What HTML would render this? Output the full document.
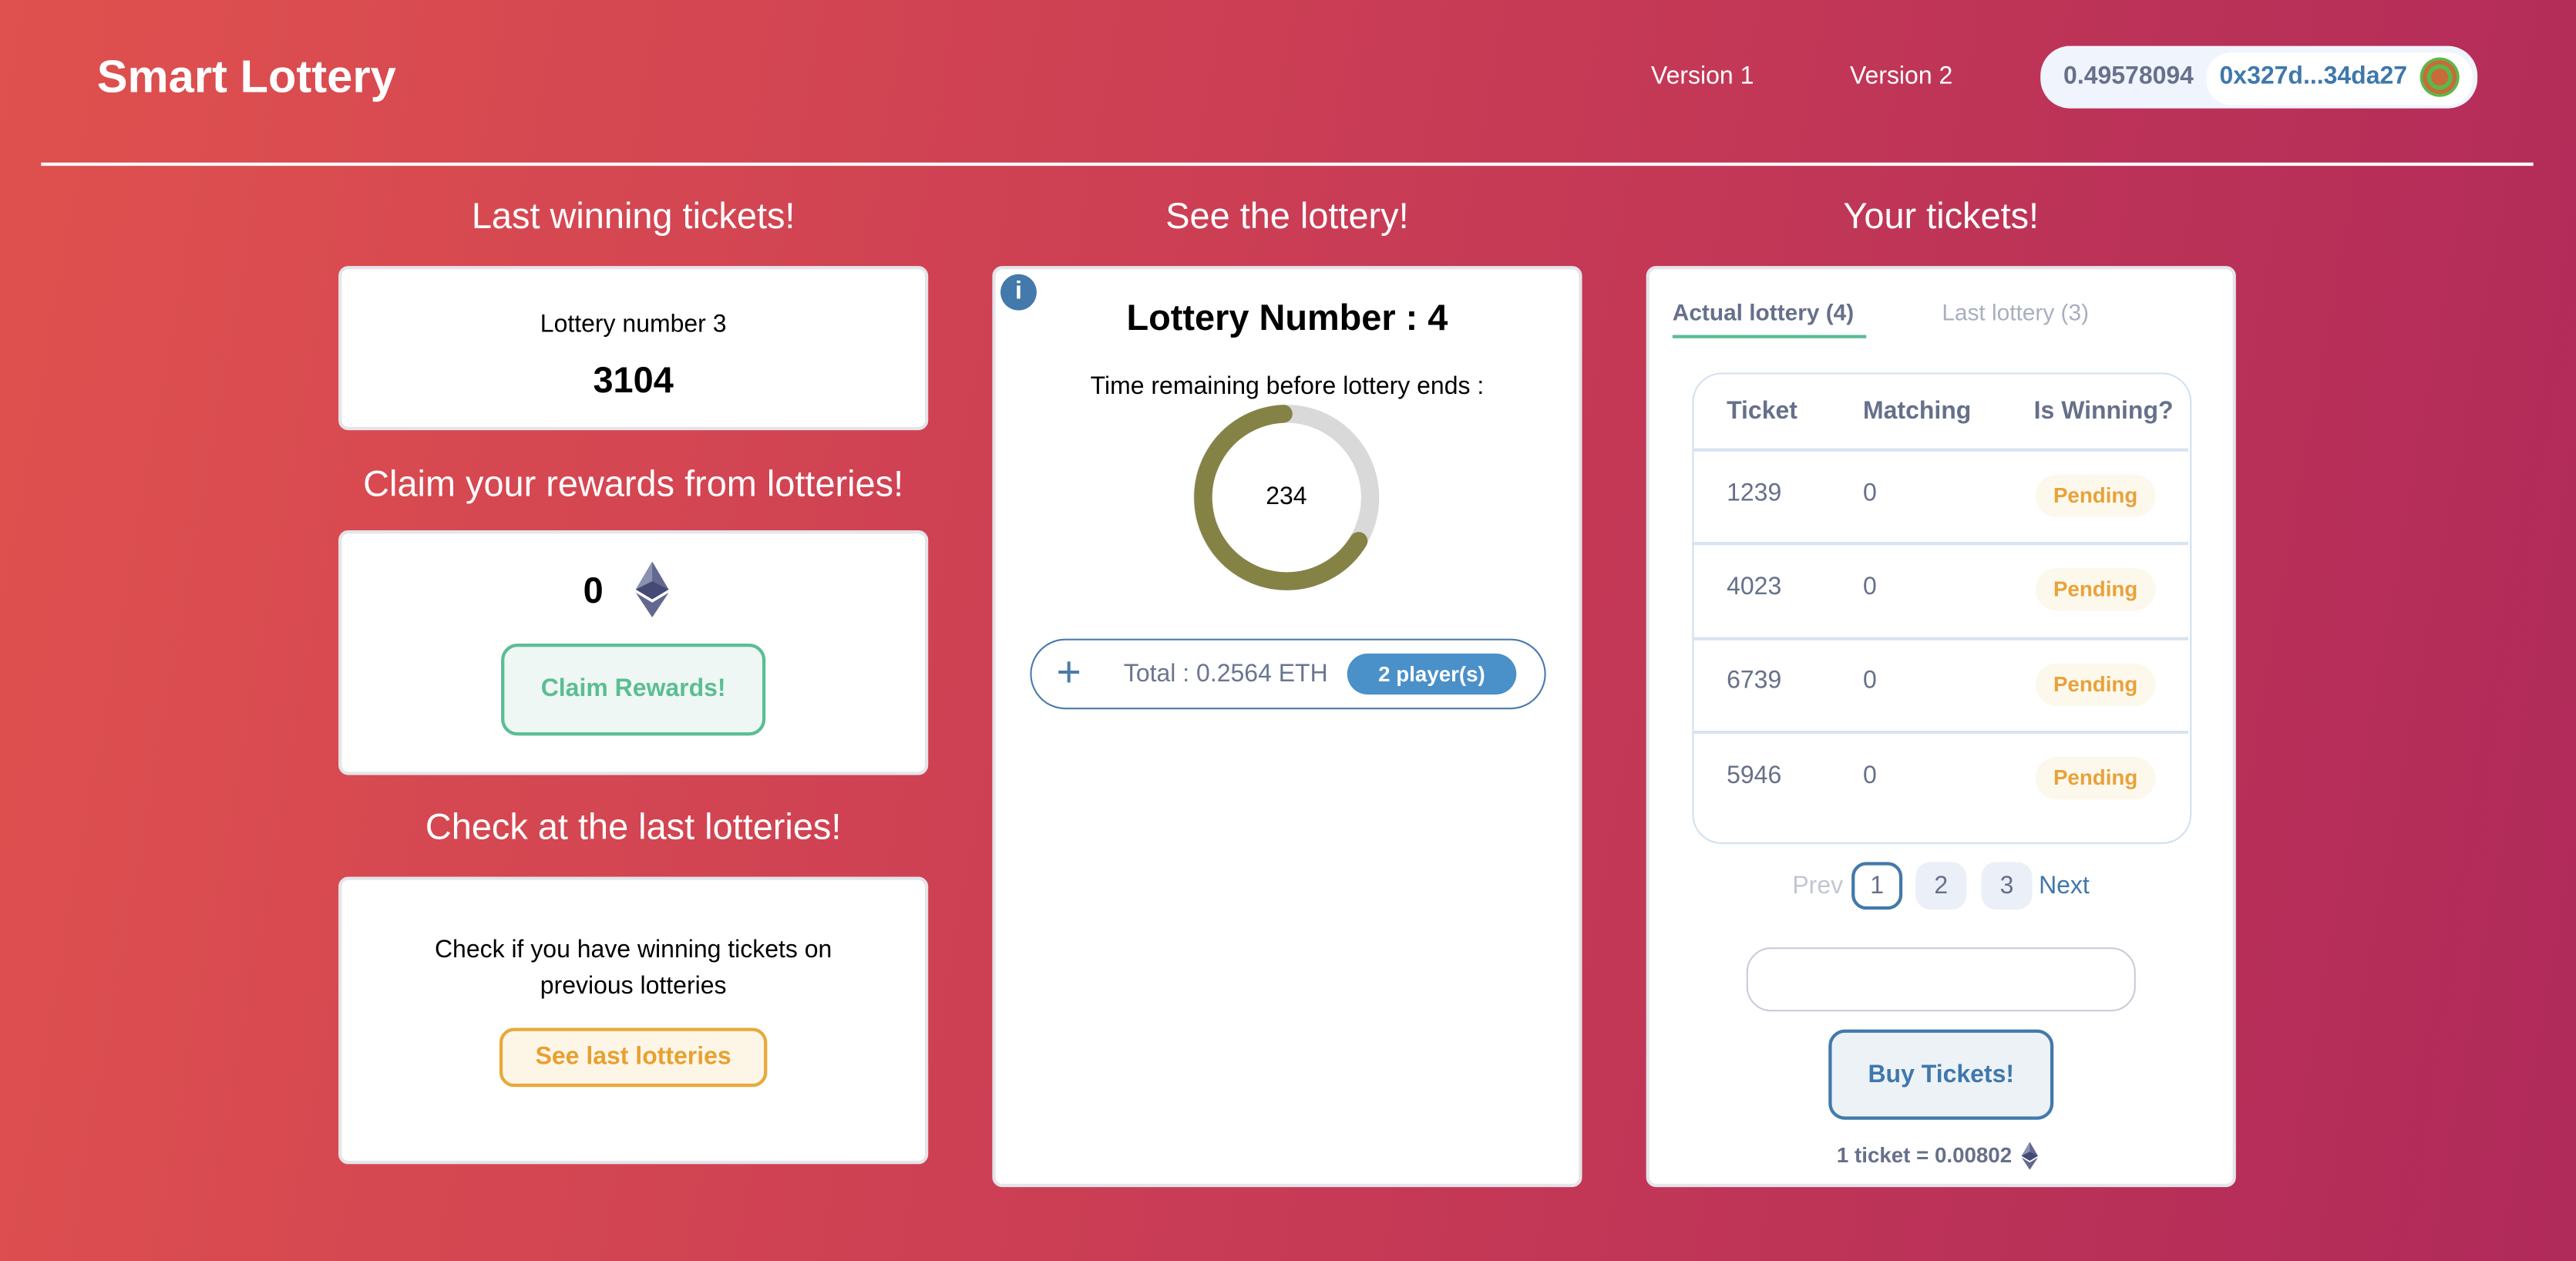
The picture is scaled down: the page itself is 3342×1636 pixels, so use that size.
<!DOCTYPE html>
<html><head><meta charset="utf-8"><style>
*{margin:0;padding:0;box-sizing:border-box}
html,body{width:3342px;height:1636px;overflow:hidden}
body{background:linear-gradient(100deg,#df514e 0%,#c93c55 50%,#b02a5a 100%);font-family:"Liberation Sans",Arial,sans-serif}
#w{position:absolute;left:0;top:0;width:1568px;height:768px;transform:scale(2.1314,2.1302);transform-origin:0 0}
.a{position:absolute}
.c{text-align:center}
.card{position:absolute;background:#fff;border:2px solid #e4e5ea;border-radius:6px}
h2{position:absolute;font-weight:400;font-size:22px;color:#fff;text-align:center;width:359px}
.t15{font-size:15px}
.hd{font-size:15px;font-weight:700;color:#66708a}
.rw{font-size:15px;color:#66708a}
.pend{position:absolute;left:1239px;width:73px;height:26px;border-radius:13px;background:#fdf8ec;color:#e8a23a;font-weight:700;font-size:13px;line-height:26px;text-align:center}
.hl{position:absolute;left:1031px;width:301px;height:1.5px;background:#d8e4f0}
</style></head><body><div id="w">
<div class="a" style="left:59px;top:31px;font-size:28px;font-weight:700;color:#fff">Smart Lottery</div>
<div class="a" style="left:1005px;top:38px;font-size:15px;color:#fff">Version 1</div>
<div class="a" style="left:1126px;top:38px;font-size:15px;color:#fff">Version 2</div>
<div class="a" style="left:1242px;top:28px;width:266px;height:38px;border-radius:18px;background:#f0f4fd"></div>
<div class="a" style="left:1256px;top:38px;font-size:15px;font-weight:700;color:#67718a">0.49578094</div>
<div class="a" style="left:1343px;top:32px;width:162px;height:32px;border-radius:15px;background:#fff"></div>
<div class="a" style="left:1351px;top:38px;font-size:15px;font-weight:700;color:#3f78ab">0x327d...34da27</div>
<div class="a" style="left:1473px;top:35px;width:24px;height:24px;border-radius:50%;background:radial-gradient(circle,#c86a3a 0 30%,#5cb84a 31% 45%,#c86a3a 46% 60%,#5cb84a 61%)"></div>
<div class="a" style="left:25px;top:99px;width:1517px;height:2px;background:#fff"></div>

<h2 style="left:206px;top:119px">Last winning tickets!</h2>
<div class="card" style="left:206px;top:162px;width:359px;height:100px"></div>
<div class="a c t15" style="left:206px;top:189px;width:359px">Lottery number 3</div>
<div class="a c" style="left:206px;top:219px;width:359px;font-size:22px;font-weight:700">3104</div>
<h2 style="left:206px;top:282px">Claim your rewards from lotteries!</h2>
<div class="card" style="left:206px;top:323px;width:359px;height:149px"></div>
<div class="a" style="left:355px;top:347px;font-size:22px;font-weight:700">0</div>
<svg class="a" style="left:386px;top:341px" width="22" height="36" viewBox="0 0 22 36"><path d="M11 1L1 18L11 24L21 18Z" fill="#62688f"/><path d="M11 1L1 18L11 13Z" fill="#8a92b2"/><path d="M11 13L1 18L11 24L21 18Z" fill="#454a75"/><path d="M1 20L11 35L21 20L11 26Z" fill="#62688f"/></svg>
<div class="a" style="left:305px;top:392px;width:161px;height:56px;border:2px solid #5bbd94;border-radius:10px;background:#eef7f3;color:#5bbd94;font-weight:700;font-size:15px;text-align:center;line-height:52px">Claim Rewards!</div>
<h2 style="left:206px;top:491px">Check at the last lotteries!</h2>
<div class="card" style="left:206px;top:534px;width:359px;height:175px"></div>
<div class="a c t15" style="left:206px;top:568px;width:359px;line-height:22px">Check if you have winning tickets on<br>previous lotteries</div>
<div class="a" style="left:304px;top:626px;width:163px;height:36px;border:2px solid #e8a93a;border-radius:9px;background:#fdf6e7;color:#e8a030;font-weight:700;font-size:15px;text-align:center;line-height:32px">See last lotteries</div>

<h2 style="left:604px;top:119px">See the lottery!</h2>
<div class="card" style="left:604px;top:162px;width:359px;height:561px"></div>
<div class="a" style="left:609px;top:167px;width:22px;height:22px;border-radius:50%;background:#4379ab;color:#fff;font-weight:700;font-size:15px;text-align:center;line-height:22px">i</div>
<div class="a c" style="left:604px;top:181px;width:359px;font-size:22px;font-weight:700">Lottery Number : 4</div>
<div class="a c t15" style="left:604px;top:227px;width:359px">Time remaining before lottery ends :</div>
<svg class="a" style="left:723px;top:243px" width="120" height="120" viewBox="0 0 120 120"><circle cx="60" cy="60" r="51" fill="none" stroke="#d9d9d9" stroke-width="11"/><path d="M60 9 A51 51 0 1 0 103 88" fill="none" stroke="#848245" stroke-width="11" stroke-linecap="round" transform="rotate(-2 60 60)"/></svg>
<div class="a c t15" style="left:723px;top:294px;width:120px">234</div>
<div class="a" style="left:627px;top:389px;width:314px;height:43px;border:1.5px solid #4a7bab;border-radius:22px"></div>
<div class="a" style="left:643px;top:395px;font-size:26px;color:#4a7bab;line-height:28px">+</div>
<div class="a" style="left:684px;top:402px;font-size:15px;color:#6b7591">Total : 0.2564 ETH</div>
<div class="a" style="left:820px;top:398px;width:103px;height:25px;border-radius:13px;background:#4a90c9;color:#fff;font-weight:700;font-size:13px;text-align:center;line-height:25px">2 player(s)</div>

<h2 style="left:1002px;top:119px">Your tickets!</h2>
<div class="card" style="left:1002px;top:162px;width:359px;height:561px"></div>
<div class="a" style="left:1018px;top:182px;font-size:14px;font-weight:700;color:#66708a">Actual lottery (4)</div>
<div class="a" style="left:1018px;top:204px;width:118px;height:2px;background:#5bbd94"></div>
<div class="a" style="left:1182px;top:182px;font-size:14px;color:#a8afbf">Last lottery (3)</div>
<div class="a" style="left:1030px;top:227px;width:304px;height:287px;border:1.5px solid #d3e1ee;border-radius:18px"></div>
<div class="a hd" style="left:1051px;top:242px">Ticket</div>
<div class="a hd" style="left:1134px;top:242px">Matching</div>
<div class="a hd" style="left:1238px;top:242px">Is Winning?</div>
<div class="hl" style="top:273px"></div><div class="hl" style="top:330px"></div><div class="hl" style="top:388px"></div><div class="hl" style="top:445px"></div>
<div class="a rw" style="left:1051px;top:292px">1239</div><div class="a rw" style="left:1134px;top:292px">0</div><div class="pend" style="top:289px">Pending</div>
<div class="a rw" style="left:1051px;top:349px">4023</div><div class="a rw" style="left:1134px;top:349px">0</div><div class="pend" style="top:346px">Pending</div>
<div class="a rw" style="left:1051px;top:406px">6739</div><div class="a rw" style="left:1134px;top:406px">0</div><div class="pend" style="top:404px">Pending</div>
<div class="a rw" style="left:1051px;top:464px">5946</div><div class="a rw" style="left:1134px;top:464px">0</div><div class="pend" style="top:461px">Pending</div>
<div class="a" style="left:1091px;top:531px;font-size:15px;color:#c0c6d3">Prev</div>
<div class="a" style="left:1127px;top:525px;width:31px;height:29px;border:2px solid #4379ab;border-radius:9px;color:#66708a;font-size:15px;text-align:center;line-height:25px">1</div>
<div class="a" style="left:1166px;top:525px;width:31px;height:29px;background:#ebeff8;border-radius:9px;color:#66708a;font-size:15px;text-align:center;line-height:29px">2</div>
<div class="a" style="left:1206px;top:525px;width:31px;height:29px;background:#ebeff8;border-radius:9px;color:#66708a;font-size:15px;text-align:center;line-height:29px">3</div>
<div class="a" style="left:1241px;top:531px;font-size:15px;color:#3f78ab">Next</div>
<div class="a" style="left:1063px;top:577px;width:237px;height:39px;border:1px solid #c8cdd8;border-radius:15px"></div>
<div class="a" style="left:1113px;top:627px;width:137px;height:55px;border:2px solid #4379ab;border-radius:10px;background:#edf2f7;color:#3f78ab;font-weight:700;font-size:15px;text-align:center;line-height:51px">Buy Tickets!</div>
<div class="a" style="left:1118px;top:696px;font-size:13px;font-weight:700;color:#66708a">1 ticket = 0.00802</div>
<svg class="a" style="left:1230px;top:695px" width="11" height="18" viewBox="0 0 22 36"><path d="M11 1L1 18L11 24L21 18Z" fill="#62688f"/><path d="M11 1L1 18L11 13Z" fill="#8a92b2"/><path d="M11 13L1 18L11 24L21 18Z" fill="#454a75"/><path d="M1 20L11 35L21 20L11 26Z" fill="#62688f"/></svg>
</div></body></html>
